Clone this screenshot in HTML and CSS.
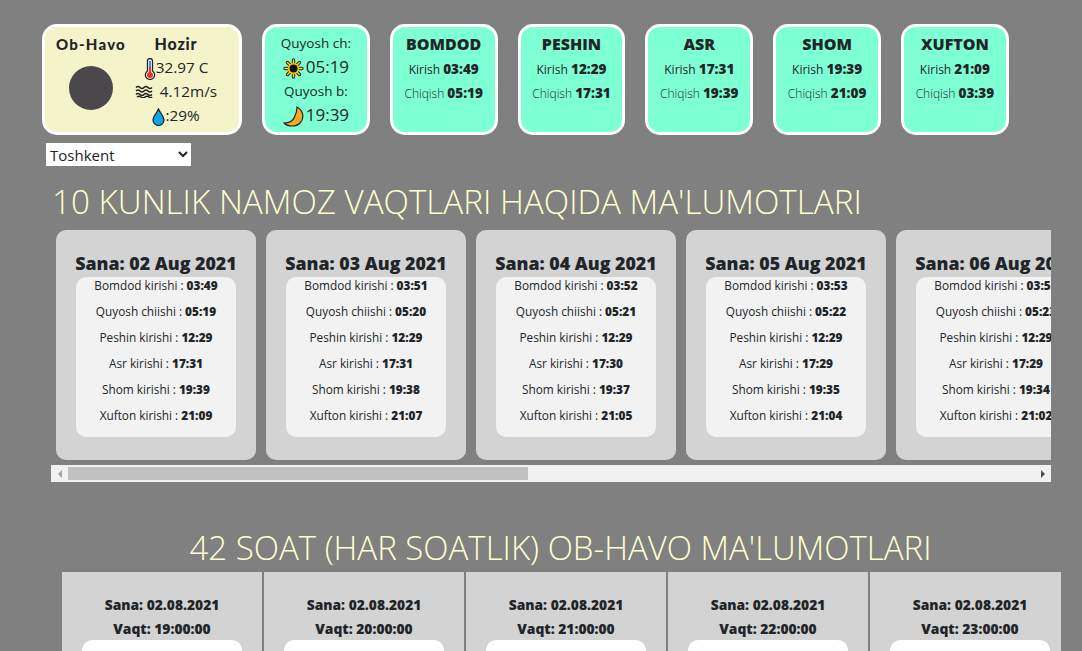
FILE: index.html
```html
<!DOCTYPE html>
<html lang="uz">
<head>
    <meta charset="UTF-8">
    <title>Namoz vaqtlari va ob-havo</title>
    <link rel="stylesheet" href="styles.css">
</head>
<body>

<div class="top-row">
    <div class="box weather">
        <div class="weather-left">
            <div class="brand">Ob-Havo</div>
            <div class="weather-img"></div>
        </div>
        <div class="weather-right">
            <div class="brand">Hozir</div>
            <div class="weather-line">
                <svg class="ico" width="12" height="22" viewBox="0 0 12 22"><path d="M3.500 3a2.500 2.500 0 0 1 5 0v10a4.600 4.600 0 1 1-5 0z" fill="#fff" stroke="#222" stroke-width="1.300"/><rect x="5" y="3" width="2" height="6" fill="#3b8fd9"/><rect x="5" y="9" width="2" height="6" fill="#e2382c"/><circle cx="6" cy="17" r="3" fill="#e2382c"/></svg>32.97 C
            </div>
            <div class="weather-line wind-line">
                <svg class="ico" width="19" height="13" viewBox="0 0 19 13" fill="none" stroke="#222" stroke-width="1.500"><path d="M1 2.500q2-2 4 0t4 0 4 0 4 0"/><path d="M1 6q2-2 4 0t4 0 4 0 4 0"/><path d="M1 9.500q2-2 4 0t4 0 4 0 4 0"/><path d="M2 12q2-1.500 4 0t4 0 4 0 3 0"/></svg>
                <span>4.12m/s</span>
            </div>
            <div class="weather-line">
                <svg class="ico" width="13" height="18" viewBox="0 0 13 18"><path d="M6.500 1C5 5 1 8 1 12a5.500 5.500 0 0 0 11 0C12 8 8 5 6.500 1z" fill="#0fa5e9" stroke="#222" stroke-width="1.200"/></svg>:29%
            </div>
        </div>
    </div>

    <div class="box sun">
        <div>Quyosh ch:</div>
        <div class="sun-time">
            <svg class="ico" width="21" height="21" viewBox="0 0 21 21"><g stroke="#222" stroke-width="3.400" stroke-linecap="round"><path d="M10.500 2v3M10.500 16v3M2 10.500h3M16 10.500h3M4.500 4.500l2 2M14.500 14.500l2 2M16.500 4.500l-2 2M6.500 14.500l-2 2"/></g><g stroke="#ffd400" stroke-width="1.500" stroke-linecap="round"><path d="M10.500 2v3M10.500 16v3M2 10.500h3M16 10.500h3M4.500 4.500l2 2M14.500 14.500l2 2M16.500 4.500l-2 2M6.500 14.500l-2 2"/></g><circle cx="10.500" cy="10.500" r="4.800" fill="#111" stroke="#ffc800" stroke-width="1.600"/></svg>05:19
        </div>
        <div>Quyosh b:</div>
        <div class="sun-time">
            <svg class="ico" width="21" height="21" viewBox="0 0 21 21"><path d="M14 1C20 4 22 12 17 17C13 21 5 21 1 17C6 17 10 15 11.500 11C13 8 14 4 14 1z" fill="#f6a821" stroke="#222" stroke-width="1.200"/></svg>19:39
        </div>
    </div>

    <div class="box prayer"><h4>BOMDOD</h4><p class="in">Kirish <b>03:49</b></p><p class="out">Chiqish <b>05:19</b></p></div>
    <div class="box prayer"><h4>PESHIN</h4><p class="in">Kirish <b>12:29</b></p><p class="out">Chiqish <b>17:31</b></p></div>
    <div class="box prayer"><h4>ASR</h4><p class="in">Kirish <b>17:31</b></p><p class="out">Chiqish <b>19:39</b></p></div>
    <div class="box prayer"><h4>SHOM</h4><p class="in">Kirish <b>19:39</b></p><p class="out">Chiqish <b>21:09</b></p></div>
    <div class="box prayer"><h4>XUFTON</h4><p class="in">Kirish <b>21:09</b></p><p class="out">Chiqish <b>03:39</b></p></div>
</div>

<select class="city">
    <option>Toshkent</option>
    <option>Samarqand</option>
    <option>Buxoro</option>
</select>

<h2 class="title">10 KUNLIK NAMOZ VAQTLARI HAQIDA MA'LUMOTLARI</h2>

<div class="days">
    <div class="day"><h3>Sana: 02 Aug 2021</h3><div class="panel">
        <p>Bomdod kirishi : <b>03:49</b></p><p>Quyosh chiishi : <b>05:19</b></p><p>Peshin kirishi : <b>12:29</b></p><p>Asr kirishi : <b>17:31</b></p><p>Shom kirishi : <b>19:39</b></p><p>Xufton kirishi : <b>21:09</b></p>
    </div></div>
    <div class="day"><h3>Sana: 03 Aug 2021</h3><div class="panel">
        <p>Bomdod kirishi : <b>03:51</b></p><p>Quyosh chiishi : <b>05:20</b></p><p>Peshin kirishi : <b>12:29</b></p><p>Asr kirishi : <b>17:31</b></p><p>Shom kirishi : <b>19:38</b></p><p>Xufton kirishi : <b>21:07</b></p>
    </div></div>
    <div class="day"><h3>Sana: 04 Aug 2021</h3><div class="panel">
        <p>Bomdod kirishi : <b>03:52</b></p><p>Quyosh chiishi : <b>05:21</b></p><p>Peshin kirishi : <b>12:29</b></p><p>Asr kirishi : <b>17:30</b></p><p>Shom kirishi : <b>19:37</b></p><p>Xufton kirishi : <b>21:05</b></p>
    </div></div>
    <div class="day"><h3>Sana: 05 Aug 2021</h3><div class="panel">
        <p>Bomdod kirishi : <b>03:53</b></p><p>Quyosh chiishi : <b>05:22</b></p><p>Peshin kirishi : <b>12:29</b></p><p>Asr kirishi : <b>17:29</b></p><p>Shom kirishi : <b>19:35</b></p><p>Xufton kirishi : <b>21:04</b></p>
    </div></div>
    <div class="day"><h3>Sana: 06 Aug 2021</h3><div class="panel">
        <p>Bomdod kirishi : <b>03:55</b></p><p>Quyosh chiishi : <b>05:23</b></p><p>Peshin kirishi : <b>12:29</b></p><p>Asr kirishi : <b>17:29</b></p><p>Shom kirishi : <b>19:34</b></p><p>Xufton kirishi : <b>21:02</b></p>
    </div></div>
</div>
<div class="scrollbar">
    <div class="scroll-btn"><span class="arrow-left"></span></div>
    <div class="scroll-track"><div class="scroll-thumb"></div></div>
    <div class="scroll-btn"><span class="arrow-right"></span></div>
</div>

<h2 class="title title-center">42 SOAT (HAR SOATLIK) OB-HAVO MA'LUMOTLARI</h2>

<div class="hours">
    <div class="hour"><p>Sana: 02.08.2021</p><p>Vaqt: 19:00:00</p><div class="hour-panel"></div></div>
    <div class="hour"><p>Sana: 02.08.2021</p><p>Vaqt: 20:00:00</p><div class="hour-panel"></div></div>
    <div class="hour"><p>Sana: 02.08.2021</p><p>Vaqt: 21:00:00</p><div class="hour-panel"></div></div>
    <div class="hour"><p>Sana: 02.08.2021</p><p>Vaqt: 22:00:00</p><div class="hour-panel"></div></div>
    <div class="hour"><p>Sana: 02.08.2021</p><p>Vaqt: 23:00:00</p><div class="hour-panel"></div></div>
</div>

</body>
</html>
```
FILE: styles.css
```css
html, body {
    margin: 0;
    height: 100%;
    overflow: hidden;
}
body {
    background-color: #808080;
    color: #212529;
    font-family: "Open Sans", "Noto Sans", sans-serif;
    padding: 24px 0 0 42px;
    box-sizing: border-box;
}
p, h2, h3, h4 {
    margin: 0;
}
.top-row {
    display: flex;
    gap: 20px;
}
.box {
    box-sizing: border-box;
    height: 111px;
    width: 107.8px;
    border: 3px solid white;
    border-radius: 15px;
    background-color: #7fffd4;
    text-align: center;
}
.ico {
    vertical-align: middle;
    flex-shrink: 0;
}

/* ob-havo */
.weather {
    width: 200px;
    background-color: #f5f3c9;
    display: flex;
    padding-top: 6px;
}
.weather-left {
    width: 92px;
    flex-shrink: 0;
}
.weather-right {
    width: 78px;
    flex-shrink: 0;
    white-space: nowrap;
}
.brand {
    font-family: Lato, sans-serif;
    font-weight: 900;
    font-size: 16px;
    line-height: 22px;
    letter-spacing: 0.8px;
}
.weather-left .brand {
    font-size: 15px;
    letter-spacing: 1.2px;
}
.weather-img {
    width: 44px;
    height: 44px;
    border-radius: 50%;
    background-color: #4a484a;
    margin: 11px auto 0;
}
.weather-line {
    font-size: 15.3px;
    line-height: 24px;
    height: 24px;
}
.wind-line {
    display: flex;
    justify-content: center;
    align-items: center;
    gap: 6px;
}

/* quyosh */
.sun {
    font-size: 13.5px;
    line-height: 24px;
    padding-top: 4px;
}
.sun-time {
    font-size: 17px;
}
.sun-time .ico {
    margin-right: 2px;
}

/* namoz qutilari */
.prayer h4 {
    font-size: 16px;
    font-weight: 800;
    line-height: 22px;
    padding-top: 6px;
    margin-bottom: 2px;
}
.prayer p {
    height: 24px;
    line-height: 24px;
    white-space: nowrap;
}
.prayer .in {
    font-size: 12px;
}
.prayer .out {
    font-size: 12px;
    font-weight: 300;
}
.prayer b {
    font-size: 13.5px;
    font-weight: 800;
}

.city {
    display: block;
    width: 145px;
    height: 23px;
    margin: 8px 0 0 4px;
    border: none;
    background-color: white;
    color: #212529;
    font-family: inherit;
    font-size: 15px;
}

.title {
    font-weight: 300;
    font-size: 33.2px;
    line-height: 40px;
    color: #ffffd0;
    margin: 16px 0 0 10px;
    white-space: nowrap;
}
.title-center {
    width: 1037px;
    margin: 46px 0 0 0;
    font-size: 33px;
    text-align: center;
}

/* 10 kunlik */
.days {
    display: flex;
    width: 1000px;
    margin: 3px 0 0 9px;
    overflow: hidden;
}
.day {
    box-sizing: border-box;
    flex: 0 0 200px;
    height: 230px;
    margin: 5px;
    padding-top: 20px;
    border-radius: 10px;
    background-color: #d3d3d3;
    text-align: center;
}
.day h3 {
    font-size: 17.8px;
    font-weight: 800;
    line-height: 27px;
    white-space: nowrap;
}
.panel {
    box-sizing: border-box;
    width: 160px;
    height: 160px;
    margin: 0 auto;
    border-radius: 10px;
    background-color: #f2f2f2;
    font-size: 11.8px;
}
.panel p {
    line-height: 16px;
    margin-bottom: 10px;
    white-space: nowrap;
}
.panel b {
    font-weight: 800;
}

/* scrollbar */
.scrollbar {
    display: flex;
    width: 1000px;
    height: 17px;
    margin-left: 9px;
    background-color: #f1f1f1;
}
.scroll-btn {
    flex: 0 0 17px;
    display: flex;
    align-items: center;
    justify-content: center;
}
.arrow-left, .arrow-right {
    width: 0;
    height: 0;
    border-top: 4px solid transparent;
    border-bottom: 4px solid transparent;
}
.arrow-left {
    border-right: 4px solid #a3a3a3;
}
.arrow-right {
    border-left: 4px solid #505050;
}
.scroll-track {
    flex: 1;
    padding: 2px 0;
    box-sizing: border-box;
}
.scroll-thumb {
    width: 460px;
    height: 13px;
    background-color: #c1c1c1;
}

/* 42 soat */
.hours {
    display: flex;
    gap: 2px;
    width: 999px;
    height: 200px;
    margin: 4px 0 0 20px;
    overflow: hidden;
}
.hour {
    box-sizing: border-box;
    flex: 0 0 200px;
    padding-top: 21px;
    background-color: #d3d3d3;
    text-align: center;
    font-size: 13.8px;
    font-weight: 800;
}
.hour p {
    line-height: 24px;
}
.hour-panel {
    width: 160px;
    height: 150px;
    margin: -1px auto 0;
    border-radius: 10px;
    background-color: white;
}
```
